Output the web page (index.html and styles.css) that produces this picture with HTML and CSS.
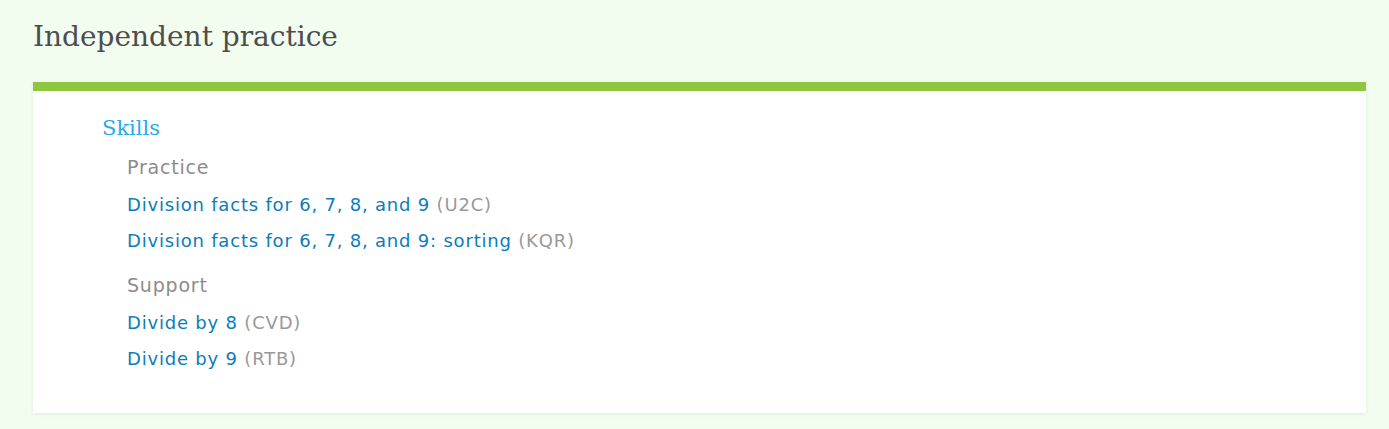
FILE: index.html
```html
<!DOCTYPE html>
<html lang="en">
<head>
  <meta charset="UTF-8" />
  <title>Independent practice</title>
  <link rel="stylesheet" href="styles.css">
</head>
<body>

<h2 class="section-title">Independent practice</h2>
<main class="card">
  <h3 class="card-heading">Skills</h3>
  <div class="group">
    <h4 class="group-title">Practice</h4>
    <ul class="skill-list">
      <li><a href="#">Division facts for 6, 7, 8, and 9</a> <span class="code">(U2C)</span></li>
      <li><a href="#">Division facts for 6, 7, 8, and 9: sorting</a> <span class="code">(KQR)</span></li>
    </ul>
  </div>
  <div class="group">
    <h4 class="group-title">Support</h4>
    <ul class="skill-list">
      <li><a href="#">Divide by 8</a> <span class="code">(CVD)</span></li>
      <li><a href="#">Divide by 9</a> <span class="code">(RTB)</span></li>
    </ul>
  </div>
</main>

</body>
</html>
```

FILE: styles.css
```css
body {
  margin: 0;
  padding: 19px 23px 17px 33px;
  background-color: #f2fdf0;
  font-family: "DejaVu Sans", Verdana, sans-serif;
}
.section-title {
  margin: 0 0 27px;
  font-family: "DejaVu Serif", serif;
  font-weight: normal;
  font-size: 28px;
  line-height: 36px;
  color: #4d4d4d;
}
.card {
  display: block;
  background-color: #fff;
  border-top: 9px solid #8dc63f;
  box-shadow: 0 1px 4px rgba(0, 0, 0, 0.08);
  padding: 23px 69px 36px;
}
.card-heading {
  margin: 0 0 13px;
  font-family: "DejaVu Serif", serif;
  font-weight: normal;
  font-size: 21px;
  line-height: 28px;
  color: #29a9e6;
}
.group {padding-left: 25px;}
.group + .group {margin-top: 14px;}
.group-title {
  margin: 0 0 8px;
  font-weight: normal;
  font-size: 19px;
  line-height: 24px;
  letter-spacing: 0.8px;
  color: #8c8c8c;
}
.skill-list {
  margin: 0;
  padding: 0;
}
.skill-list li {
  list-style: none;
  font-size: 18px;
  line-height: 36px;
  letter-spacing: 0.8px;
}
.skill-list a {
  color: #0c7cba;
  text-decoration: none;
}
.code {color: #999;}
```
